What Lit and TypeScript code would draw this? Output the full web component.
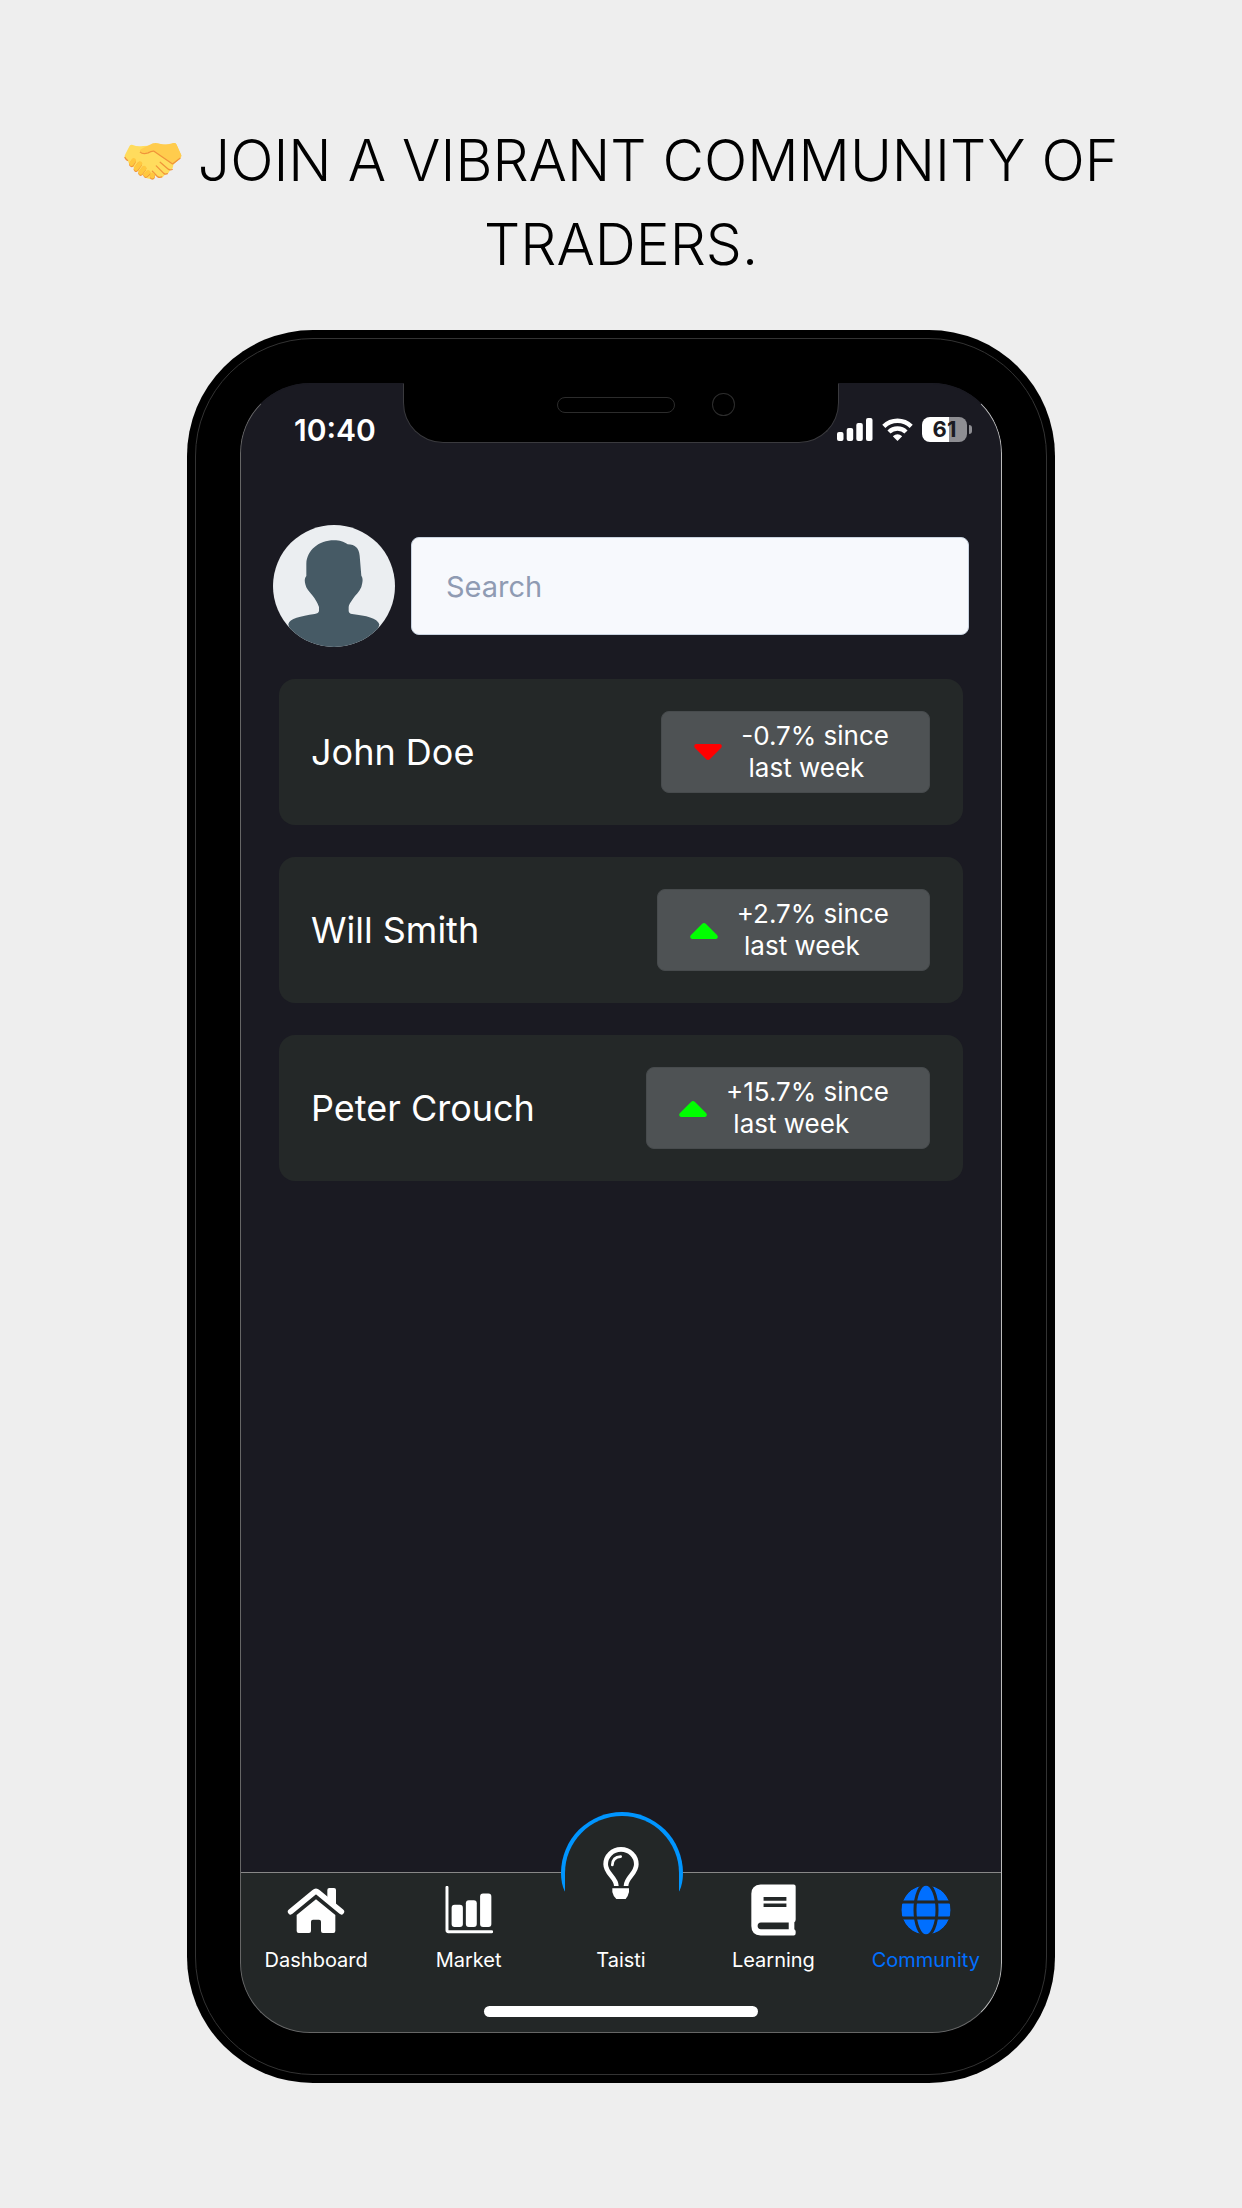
import { LitElement, html, css, svg } from "lit";
import { customElement } from "lit/decorators.js";

interface Trader {
  name: string;
  change: string;
  up: boolean;
}

interface Tab {
  label: string;
  icon: unknown;
  active?: boolean;
}

const traders: Trader[] = [
  { name: "John Doe", change: "-0.7% since", up: false },
  { name: "Will Smith", change: "+2.7% since", up: true },
  { name: "Peter Crouch", change: "+15.7% since", up: true },
];

const handshake = html`<svg class="emoji" viewBox="45 62 178 120" role="img" aria-label="handshake">
  <path d="M135 75 Q139 67 155 70 Q174 74 188 71 L197 67 Q203 66 206 71 L221 104 Q222 110 217 114 L194 135 L180 122 L130 92 Z" fill="#ffcc4d"/>
  <path d="M47 110 Q46 106 49 101 L62 76 Q66 70 72 73 Q86 79 103 76 L125 75 L150 92 L196 128 Q198 147 186 149 Q184 162 171 163 Q166 175 154 172 Q146 170 140 166 Q138 180 126 177 Q114 176 108 170 L72 140 Q58 134 57 120 Z" fill="#ffdc5d"/>
  <path d="M47 110 Q50 116 57 121" fill="none" stroke="#f0943a" stroke-width="4"/>
  <path d="M94 93 Q104 102 119 95 Q128 90 135 91 L193 131 L217 112 L221 105 L206 71 Q203 66 197 67 Q174 75 155 69 Q139 64 126 71 Q112 77 97 86 Q92 89 94 93Z" fill="#ffcc4d"/>
  <path d="M94 94 Q103 103 119 97 Q129 91 137 92 L194 131 L218 113" fill="none" stroke="#f0943a" stroke-width="4" stroke-linejoin="round"/>
  <path d="M156 126 L181 147 Q187 151 193 148 M144 137 L167 160 Q172 164 178 161 M132 153 L148 170 Q154 174 161 171" fill="none" stroke="#f0943a" stroke-width="4" stroke-linecap="round"/>
  <g fill="none" stroke-linecap="round">
    <g stroke="#f0943a" stroke-width="15">
      <path d="M74 124 L68 133"/><path d="M93 132 L82 148"/><path d="M106 146 L96 160"/><path d="M119 160 L112 166"/><path d="M132 168 L132 172"/>
    </g>
    <g stroke="#ffc83f" stroke-width="14">
      <path d="M75 120 L68 130"/><path d="M94 130 L82 145"/><path d="M107 144 L96 157"/><path d="M119 157 L112 164"/><path d="M132 164 L132 169"/>
    </g>
  </g>
</svg>`;

const avatar = html`<svg class="avatar" viewBox="39 30 366 366" role="img" aria-label="Profile">
  <defs><clipPath id="face"><circle cx="222" cy="213" r="183"/></clipPath></defs>
  <g clip-path="url(#face)">
    <rect x="39" y="30" width="366" height="366" fill="#ebeef1"/>
    <path fill="#465a65" d="M222 76 C240 76 250 80 263 88 C286 88 297 100 299 122 L304 182 C310 190 308 202 304 216 C299 230 286 240 280 250 C272 262 266 270 266 276 V288 Q267 296 276 297 C318 302 352 309 358 328 L340 400 H104 L85 328 C88 310 122 304 164 297 Q176 295 177 288 V276 C172 262 166 252 158 242 C148 231 138 220 136 208 C133 196 134 189 139 183 V146 C141 106 176 76 222 76Z"/>
  </g>
</svg>`;

const homeIcon = html`<svg class="home" viewBox="322 290 174 141" aria-hidden="true">
  <g fill="currentColor">
    <path d="M443 330 V299 q0-6 6-6 h14 q6 0 6 6 V352Z"/>
    <path d="M409 327 L467 374 V422 q0 6-6 6 H430 q-6 0-6-6 V394 q0-6-6-6 h-18 q-6 0-6 6 V422 q0 6-6 6 H357 q-6 0-6-6 V374Z"/>
  </g>
  <path d="M333 364 L403 306 Q409 301 415 306 L485 364" fill="none" stroke="currentColor" stroke-width="17" stroke-linecap="round"/>
</svg>`;

const marketIcon = html`<svg class="market" viewBox="793 288 145 145" aria-hidden="true">
  <path d="M799 292 V422 q0 4 4 4 H934" fill="none" stroke="currentColor" stroke-width="9" stroke-linecap="round"/>
  <g fill="currentColor">
    <rect x="813" y="345" width="34" height="67" rx="9"/>
    <rect x="856" y="331" width="33" height="81" rx="9"/>
    <rect x="899" y="311" width="34" height="101" rx="9"/>
  </g>
</svg>`;

const bookIcon = html`<svg class="book" viewBox="391 282 136 156" aria-hidden="true">
  <path fill="currentColor" fill-rule="evenodd" d="M420 283 H520 Q526 283 526 289 V389 Q526 395 522 397 V418 Q526 420 526 425 V430 Q526 437 520 437 H420 Q392 435 392 408 V311 Q392 285 420 283Z M429 321 V332 H498 V321Z M429 340 V351 H498 V340Z M421 398 Q411 399 411 408 Q411 417 421 418 H505 V398Z"/>
</svg>`;

const globeIcon = html`<svg class="globe" viewBox="839 285 150 150" aria-hidden="true">
  <defs>
    <mask id="grid">
      <circle cx="914" cy="360" r="74" fill="#fff"/>
      <g fill="none" stroke="#000" stroke-width="9">
        <path d="M830 336 H998 M830 384 H998"/>
        <ellipse cx="914" cy="360" rx="33" ry="78"/>
      </g>
    </mask>
  </defs>
  <circle cx="914" cy="360" r="74" fill="currentColor" mask="url(#grid)"/>
</svg>`;

const bulbIcon = html`<svg class="bulb" viewBox="33 36 366 282" aria-hidden="true">
  <path fill="#0095ff" d="M44 274 Q33 250 33 219 A183 183 0 0 1 399 219 Q399 250 388 274Z"/>
  <path fill="#232727" d="M45 318 V219 A171 171 0 0 1 387 219 V318Z"/>
  <path d="M199 258 C199 232 167 222 167 193 A46 45 0 0 1 259 193 C259 222 228 232 228 258" fill="none" stroke="#fff" stroke-width="14"/>
  <path d="M187 195 Q188 171 212 170" fill="none" stroke="#fff" stroke-width="8" stroke-linecap="round"/>
  <path d="M187 265 H237 V276 Q234 290 227 297 H199 Q190 290 187 276Z" fill="#fff"/>
</svg>`;

const tabs: Tab[] = [
  { label: "Dashboard", icon: homeIcon },
  { label: "Market", icon: marketIcon },
  { label: "Taisti", icon: bulbIcon },
  { label: "Learning", icon: bookIcon },
  { label: "Community", icon: globeIcon, active: true },
];

const caret = (up: boolean) => html`<svg class="caret ${up ? "up" : "down"}" viewBox="0 0 28 18" aria-hidden="true">
  ${up
    ? svg`<path fill="currentColor" d="M12 3 Q14 1 16 3 L27 14 Q29 17 26 18 H2 Q-1 17 1 14Z"/>`
    : svg`<path fill="currentColor" d="M12 16 Q14 18 16 16 L27 5 Q29 2 26 1 H2 Q-1 2 1 5Z"/>`}
</svg>`;

@customElement("app-root")
export class AppRoot extends LitElement {
  static styles = css`
    :host {
      display: block;
      font-family: Inter, "Liberation Sans", sans-serif;
      color: #fff;
    }
    * {
      box-sizing: border-box;
    }
    .page {
      min-height: 100vh;
      display: flex;
      flex-direction: column;
      gap: 43px;
      padding: 119px 0 125px;
      background: #eee;
    }
    .title {
      margin: 0;
      padding: 0 100px;
      color: #000;
      font-size: 57px;
      font-weight: 300;
      line-height: 84px;
      text-align: center;
    }
    .emoji {
      width: 58px;
      height: 40px;
      vertical-align: baseline;
    }
    .phone {
      position: relative;
      flex: 1;
      display: flex;
      margin: 0 187px;
      padding: 53px 53px 50px;
      border-radius: 126px;
      background: #000;
    }
    .phone::before {
      content: "";
      position: absolute;
      inset: 8px;
      border: 1px solid #333;
      border-radius: 118px;
    }
    .screen {
      position: relative;
      flex: 1;
      min-width: 0;
      display: flex;
      flex-direction: column;
      overflow: hidden;
      border-radius: 70px;
      background: #1a1a22;
    }
    .screen::after {
      content: "";
      position: absolute;
      inset: 0;
      border: 1px solid #666;
      border-top-color: #1a1a22;
      border-right-color: #bbb;
      border-radius: 70px;
      pointer-events: none;
    }
    .notch {
      position: absolute;
      z-index: 1;
      top: 0;
      left: 50%;
      width: 436px;
      height: 60px;
      transform: translateX(-50%);
      display: flex;
      align-items: center;
      gap: 37px;
      padding: 0 103px 17px 153px;
      border: 1px solid #3a3a3e;
      border-top-color: #000;
      border-radius: 0 0 40px 40px;
      background: #000;
    }
    .speaker {
      width: 120px;
      height: 16px;
      border: 1px solid #2c2c2c;
      border-radius: 8px;
    }
    .camera {
      width: 23px;
      height: 23px;
      border: 1px solid #2c2c2c;
      border-radius: 50%;
    }
    .status {
      display: flex;
      align-items: center;
      justify-content: space-between;
      height: 142px;
      padding: 0 30px 49px 54px;
    }
    .time {
      font-size: 30px;
      font-weight: 600;
    }
    .signals {
      display: flex;
      align-items: center;
      gap: 9px;
    }
    .bars {
      width: 36px;
      height: 23px;
    }
    .wifi {
      width: 31px;
      height: 23px;
    }
    .battery {
      display: flex;
      align-items: center;
      gap: 2px;
    }
    .level {
      width: 45px;
      border-radius: 8px;
      background: linear-gradient(90deg, #fff 61%, #8e8e93 61%);
      color: #1a1a22;
      font-size: 22px;
      font-weight: 700;
      line-height: 25px;
      text-align: center;
    }
    .cap {
      width: 3px;
      height: 9px;
      border-radius: 0 4px 4px 0;
      background: #8e8e93;
    }
    .search {
      display: flex;
      align-items: center;
      gap: 16px;
      padding: 0 33px;
    }
    .avatar {
      flex: none;
      width: 122px;
      height: 122px;
    }
    .field {
      flex: 1;
      min-width: 0;
      height: 98px;
      padding: 0 34px;
      border: 1px solid #c9d3e0;
      border-radius: 8px;
      background: #f7f9fd;
      color: #222b45;
      font: inherit;
      font-size: 29px;
    }
    .field::placeholder {
      color: #8f9bb3;
      opacity: 1;
    }
    .list {
      flex: 1;
      display: flex;
      flex-direction: column;
      gap: 32px;
      margin: 0;
      padding: 32px 39px;
      list-style: none;
    }
    .card {
      display: flex;
      align-items: center;
      justify-content: space-between;
      padding: 32px 33px 32px 32px;
      border-radius: 16px;
      background: #242828;
    }
    .name {
      font-size: 36px;
    }
    .badge {
      display: flex;
      align-items: center;
      gap: 19px;
      padding: 8px 40px 8px 32px;
      border: 1px solid #474b4d;
      border-radius: 8px;
      background: #4e5254;
      font-size: 26px;
      line-height: 32px;
      white-space: pre;
    }
    .caret {
      width: 28px;
      height: 18px;
    }
    .up {
      color: #0f0;
    }
    .down {
      color: #f00;
    }
    .nav {
      border-top: 1px solid #888;
      padding: 12px 0 16px;
      background: #232727;
    }
    .tabs {
      display: grid;
      grid-template-columns: repeat(5, 1fr);
    }
    .tab {
      position: relative;
      display: flex;
      flex-direction: column;
      align-items: center;
      gap: 13px;
      color: #fff;
      font-size: 20px;
      line-height: 24px;
      text-decoration: none;
    }
    .active {
      color: #006fff;
    }
    .slot {
      display: flex;
      align-items: center;
      justify-content: center;
      height: 50px;
    }
    .home {
      width: 58px;
      height: 47px;
    }
    .market {
      width: 48px;
      height: 48px;
    }
    .book {
      width: 45px;
      height: 52px;
    }
    .globe {
      width: 50px;
      height: 50px;
    }
    .bulb {
      position: absolute;
      left: calc(50% - 60px);
      top: -73px;
      width: 122px;
      height: 94px;
    }
    .indicator {
      width: 36%;
      height: 11px;
      margin: 34px auto 0;
      border-radius: 6px;
      background: #fff;
    }
  `;

  render() {
    return html`
      <main class="page">
        <h1 class="title">${handshake} JOIN A VIBRANT COMMUNITY OF TRADERS.</h1>
        <div class="phone">
          <div class="screen">
            <div class="notch"><span class="speaker"></span><span class="camera"></span></div>
            <div class="status">
              <span class="time">10:40</span>
              <div class="signals">
                <svg class="bars" viewBox="0 0 36 23" fill="#fff" aria-hidden="true">
                  <rect x="0" y="14" width="6.5" height="9" rx="2"/>
                  <rect x="9.7" y="10" width="6.5" height="13" rx="2"/>
                  <rect x="19.3" y="5" width="6.5" height="18" rx="2"/>
                  <rect x="29" y="0" width="6.5" height="23" rx="2"/>
                </svg>
                <svg class="wifi" viewBox="0 0 31 23" fill="none" stroke="#fff" stroke-width="4.4" aria-hidden="true">
                  <path d="M1.8 8.4 A19.5 19.5 0 0 1 29.2 8.4"/>
                  <path d="M7 14 A12 12 0 0 1 24 14"/>
                  <path d="M15.5 23 L10.8 18.2 Q15.5 14.4 20.2 18.2Z" fill="#fff" stroke="none"/>
                </svg>
                <div class="battery"><span class="level">61</span><span class="cap"></span></div>
              </div>
            </div>
            <div class="search">
              ${avatar}
              <input class="field" type="text" placeholder="Search" aria-label="Search" />
            </div>
            <ul class="list">
              ${traders.map(
                (t) => html`<li class="card">
                  <span class="name">${t.name}</span>
                  <span class="badge">${caret(t.up)}<span>${t.change + "\n last week"}</span></span>
                </li>`
              )}
            </ul>
            <nav class="nav">
              <div class="tabs">
                ${tabs.map(
                  (t) => html`<a class="tab ${t.active ? "active" : ""}" href="#${t.label.toLowerCase()}"
                    ><span class="slot">${t.icon}</span><span>${t.label}</span></a
                  >`
                )}
              </div>
              <div class="indicator"></div>
            </nav>
          </div>
        </div>
      </main>
    `;
  }
}
